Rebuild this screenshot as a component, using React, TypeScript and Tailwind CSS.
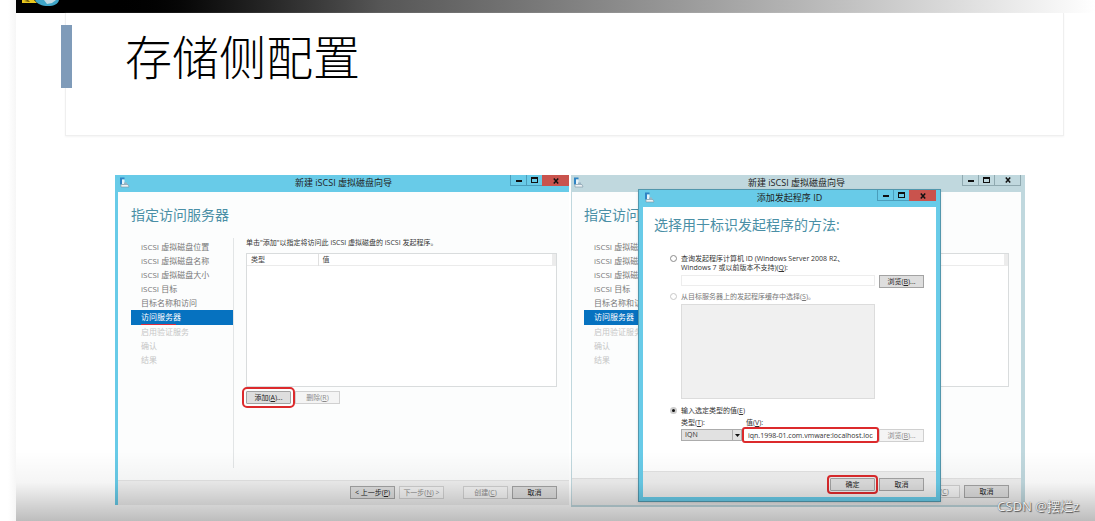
import type React from "react"

import { useState } from "react"

const steps = [
  "iSCSI 虚拟磁盘位置",
  "iSCSI 虚拟磁盘名称",
  "iSCSI 虚拟磁盘大小",
  "iSCSI 目标",
  "目标名称和访问",
  "访问服务器",
  "启用验证服务",
  "确认",
  "结果",
]
const currentStep = 5

function ServerIcon() {
  return (
    <svg viewBox="0 0 11 11" className="h-[11px] w-[11px] shrink-0" aria-hidden="true">
      <path d="M1 0.5h4.5v2H3v5H1z" fill="#2f84c4" />
      <path d="M3 2.5h2.5v4.5H3z" fill="#e9f4fa" />
      <path d="M2 7.5h7l1 2.5H2z" fill="#eef3f6" stroke="#7b93a3" strokeWidth="0.6" />
      <path d="M5 5.5h3v2H5z" fill="#9cb4c2" />
    </svg>
  )
}

function TitleBar({ title, active }: { title: string; active: boolean }) {
  const line = active ? "border-[#4a9dbb]" : "border-[#8fa9b0]"

  return (
    <header className={`flex h-[17px] items-start ${active ? "bg-[#68cbe8]" : "bg-[#c0d8de]"}`}>
      <div className="flex w-[59px] pt-[2px] pl-px">
        <ServerIcon />
      </div>
      <h2 className="flex-1 text-center text-[9px] leading-[15px] text-[#222]">{title}</h2>
      <div className="flex h-[11px]">
        <button type="button" aria-label="最小化" className={`flex w-[17px] justify-center border border-t-0 ${line}`}>
          <span className="mt-[5px] h-[2px] w-[6px] bg-[#111]" />
        </button>
        <button type="button" aria-label="最大化" className={`flex w-[15px] justify-center border-b ${line}`}>
          <span className="mt-[2px] h-[6px] w-[7px] border border-t-2 border-[#111]" />
        </button>
        <button
          type="button"
          aria-label="关闭"
          className={`flex w-[27px] items-center justify-center ${active ? "bg-[#c9534d]" : `border border-t-0 ${line}`}`}
        >
          <svg viewBox="0 0 6 6" className="h-[6px] w-[6px]" aria-hidden="true">
            <path d="M0.8 0.5L5.2 5.5M5.2 0.5L0.8 5.5" stroke="#111" strokeWidth="1.5" />
          </svg>
        </button>
      </div>
    </header>
  )
}

function WinButton({
  children,
  disabled = false,
  marked = "",
}: {
  children: React.ReactNode
  disabled?: boolean
  marked?: string
}) {
  return (
    <button
      type="button"
      disabled={disabled}
      className={`h-[13px] w-[45px] shrink-0 border text-center text-[7px] leading-[11px] whitespace-nowrap ${
        disabled ? "border-[#d0d0d0] bg-[#f4f4f4] text-[#8b8b8b]" : "border-[#a3a3a3] bg-[#dedede] text-[#222]"
      } ${marked}`}
    >
      {children}
    </button>
  )
}

function Wizard({ active }: { active: boolean }) {
  return (
    <section
      className={`bg-[#fcfdfd] ${
        active ? "border-l-[3px] border-[#68cbe8]" : "border-r-4 border-b-2 border-l border-[#c0d8de]"
      }`}
    >
      <TitleBar title="新建 iSCSI 虚拟磁盘向导" active={active} />
      <div className={`pt-3 pr-3 ${active ? "pb-3 pl-[13px]" : "pb-[10px] pl-3"}`}>
        <h3 className="text-[14px] leading-[22px] whitespace-nowrap text-[#4a8fa6]">指定访问服务器</h3>
        <div className="mt-3 flex">
          <ol className="h-[230px] w-[103px] shrink-0 border-r border-[#e2e5e6] pt-[2px] text-[8px] leading-[14px]">
            {steps.map((step, i) => (
              <li
                key={step}
                className={`pl-[10px] whitespace-nowrap ${
                  i === currentStep
                    ? "relative h-[15px] bg-[#0672c0] text-white"
                    : i < currentStep
                      ? "h-[14px] text-[#777]"
                      : "h-[14px] text-[#c6c6c6]"
                }`}
              >
                {step}
                {active && i === currentStep && (
                  <span className="absolute bottom-0 left-[10px] h-px w-[35px] bg-[#e02b3c]" />
                )}
              </li>
            ))}
          </ol>
          <div className="ml-3 min-w-0 flex-1">
            <p className="text-[7px] leading-[10px] whitespace-nowrap text-[#333]">
              单击"添加"以指定将访问此 iSCSI 虚拟磁盘的 iSCSI 发起程序。
            </p>
            <div className="mt-[5px] h-[134px] border border-[#d9dcdd] bg-white">
              <table className="w-full table-fixed border-collapse text-left text-[7px] leading-[11px] text-[#444]">
                <thead>
                  <tr className="border-b border-[#ebebeb]">
                    <th className="w-[71px] border-r border-[#e0e0e0] py-0 pl-1 font-normal">类型</th>
                    <th className="border-r-4 border-[#ececec] py-0 pl-1 font-normal">值</th>
                  </tr>
                </thead>
              </table>
            </div>
            <div className="mt-1 flex gap-1">
              <WinButton marked="outline-2 outline-offset-2 outline-[#dc2a2c] rounded-[1px]">
                添加(<u>A</u>)...
              </WinButton>
              <WinButton disabled>
                删除(<u>R</u>)
              </WinButton>
            </div>
          </div>
        </div>
      </div>
      <footer
        className={`flex justify-end gap-1 border-t border-[#e2e2e2] bg-[#efefef] pr-3 ${
          active ? "h-[25px] pt-[5px]" : "h-[27px] pt-[6px]"
        }`}
      >
        <WinButton>
          &lt; 上一步(<u>P</u>)
        </WinButton>
        <WinButton disabled>
          下一步(<u>N</u>) &gt;
        </WinButton>
        <span className="w-[11px]" />
        <WinButton disabled>
          创建(<u>C</u>)
        </WinButton>
        <WinButton>取消</WinButton>
      </footer>
    </section>
  )
}

function Radio({
  id,
  checked,
  disabled = false,
  onSelect,
}: {
  id: string
  checked: boolean
  disabled?: boolean
  onSelect: (id: string) => void
}) {
  return (
    <input
      id={id}
      type="radio"
      name="method"
      checked={checked}
      disabled={disabled}
      onChange={() => onSelect(id)}
      className="mt-px mr-1 h-[7px] w-[7px] shrink-0 appearance-none rounded-full border border-[#8c8c8c] bg-white checked:border-2 checked:border-[#ccc] checked:bg-[#111] disabled:border-[#c8c8c8]"
    />
  )
}

function InitiatorDialog() {
  const [method, setMethod] = useState("manual")
  const [iqn, setIqn] = useState("iqn.1998-01.com.vmware:localhost.localdomain")

  return (
    <section
      role="dialog"
      aria-label="添加发起程序 ID"
      className="absolute top-[14px] right-[84px] bottom-[5px] left-[67px] border border-[#5297ad] bg-[#68cbe8] shadow-sm"
    >
      <div className="mx-1 mb-1 bg-white">
        <TitleBar title="添加发起程序 ID" active />
        <div className="h-[264px] pt-[7px] pr-3 pl-[11px]">
          <h3 className="text-[14px] leading-[22px] whitespace-nowrap text-[#4a8fa6]">
            选择用于标识发起程序的方法:
          </h3>
          <div className="mt-[18px] pl-4 text-[7px] leading-[9px] text-[#333]">
            <div className="flex">
              <Radio id="query" checked={method === "query"} onSelect={setMethod} />
              <label htmlFor="query" className="whitespace-nowrap">
                查询发起程序计算机 ID (Windows Server 2008 R2、
                <br />
                Windows 7 或以前版本不支持)(<u>Q</u>):
              </label>
            </div>
            <div className="mt-[3px] flex gap-1 pl-[11px]">
              <input
                type="text"
                aria-label="计算机 ID"
                disabled
                className="h-[11px] min-w-0 flex-1 border border-[#ededed] bg-white px-1"
              />
              <WinButton>
                浏览(<u>B</u>)...
              </WinButton>
            </div>
            <div className="mt-1 flex text-[#777]">
              <Radio id="cache" checked={method === "cache"} disabled onSelect={setMethod} />
              <label htmlFor="cache" className="whitespace-nowrap">
                从目标服务器上的发起程序缓存中选择(<u>S</u>)。
              </label>
            </div>
            <div className="mt-[3px] mr-[49px] ml-[11px] h-[95px] border border-[#dcdcdc] bg-[#f0f0f0]" />
            <div className="mt-[7px] flex">
              <Radio id="manual" checked={method === "manual"} onSelect={setMethod} />
              <label htmlFor="manual" className="whitespace-nowrap">
                输入选定类型的值(<u>E</u>)
              </label>
            </div>
            <div className="mt-[3px] flex pl-[11px]">
              <label htmlFor="kind" className="w-[65px]">
                类型(<u>T</u>):
              </label>
              <label htmlFor="value">
                值(<u>V</u>):
              </label>
            </div>
            <div className="mt-[2px] flex gap-[2px] pl-[11px]">
              <div className="relative h-[12px] w-[61px] shrink-0">
                <select
                  id="kind"
                  className="block h-[12px] w-full appearance-none border border-[#acacac] bg-[#e1e1e1] pl-[3px] text-[7px] leading-[10px]"
                >
                  <option>IQN</option>
                </select>
                <span className="pointer-events-none absolute inset-y-px right-px flex w-[9px] items-center justify-center border-l border-[#acacac]">
                  <svg viewBox="0 0 5 3" className="h-[3px] w-[5px]" aria-hidden="true">
                    <path d="M0 0h5L2.5 3z" fill="#111" />
                  </svg>
                </span>
              </div>
              <input
                id="value"
                type="text"
                value={iqn}
                onChange={(e) => setIqn(e.target.value)}
                className="h-[12px] min-w-0 flex-1 rounded-[1px] bg-white px-[4px] text-[7px] leading-[10px] outline-2 outline-[#dc2a2c]"
              />
              <WinButton disabled>
                浏览(<u>B</u>)...
              </WinButton>
            </div>
          </div>
        </div>
        <footer className="flex h-[26px] justify-end gap-1 border-t border-[#e2e2e2] bg-[#efefef] pt-[6px] pr-3">
          <WinButton marked="outline-2 outline-offset-1 outline-[#dc2a2c] rounded-[1px] border-[#7fb6dc]">确定</WinButton>
          <WinButton>取消</WinButton>
        </footer>
      </div>
    </section>
  )
}

export default function App() {
  return (
    <div className="bg-linear-to-r from-white from-[8px] to-[#f6f6f6] to-[16px] pl-4 font-['Open_Sans','Noto_Sans_CJK_SC',sans-serif]">
      <main className="relative overflow-hidden bg-white pb-[14px]">
        <div className="h-[13px] bg-linear-to-r from-black from-8% via-[#575757] via-34% to-white">
          <svg viewBox="0 0 46 13" className="h-[13px] w-[46px]" aria-hidden="true">
            <path d="M6 0h12l3 3H6z" fill="#e9c81f" />
            <path d="M8 1l4-1 2 2z" fill="#5a4a08" />
            <path d="M19 0h24c-1 4-5 6-11 6S21 4 19 0z" fill="#3fa6c9" />
            <path d="M28 0h12l-4 3-5 1z" fill="#c3dbe4" />
          </svg>
        </div>

        <div className="mr-[31px] ml-[49px] flex h-[123px] border border-t-0 border-[#efefef] shadow-[0_1px_2px_#f4f4f4]">
          <span className="mt-3 -ml-[5px] h-[63px] w-[11px] bg-[#7f9bb9]" />
          <h1 className="ml-[53px] pt-[12px] text-[47px] leading-[64px] font-light whitespace-nowrap text-black">
            存储侧配置
          </h1>
        </div>

        <div className="mt-[39px] mr-[70px] ml-[99px] grid grid-cols-2 items-start gap-[2px]">
          <Wizard active />
          <div className="relative">
            <Wizard active={false} />
            <InitiatorDialog />
          </div>
        </div>

        <div className="pointer-events-none absolute inset-x-0 bottom-0 h-[70px] bg-linear-to-b from-transparent via-black/4 via-45% to-black/26" />
        <p className="absolute right-4 bottom-[6px] text-[13px] leading-[18px] text-[#eee] [text-shadow:1px_1px_1px_#555,0_0_1px_#555]">
          CSDN @摆烂z
        </p>
      </main>
    </div>
  )
}
